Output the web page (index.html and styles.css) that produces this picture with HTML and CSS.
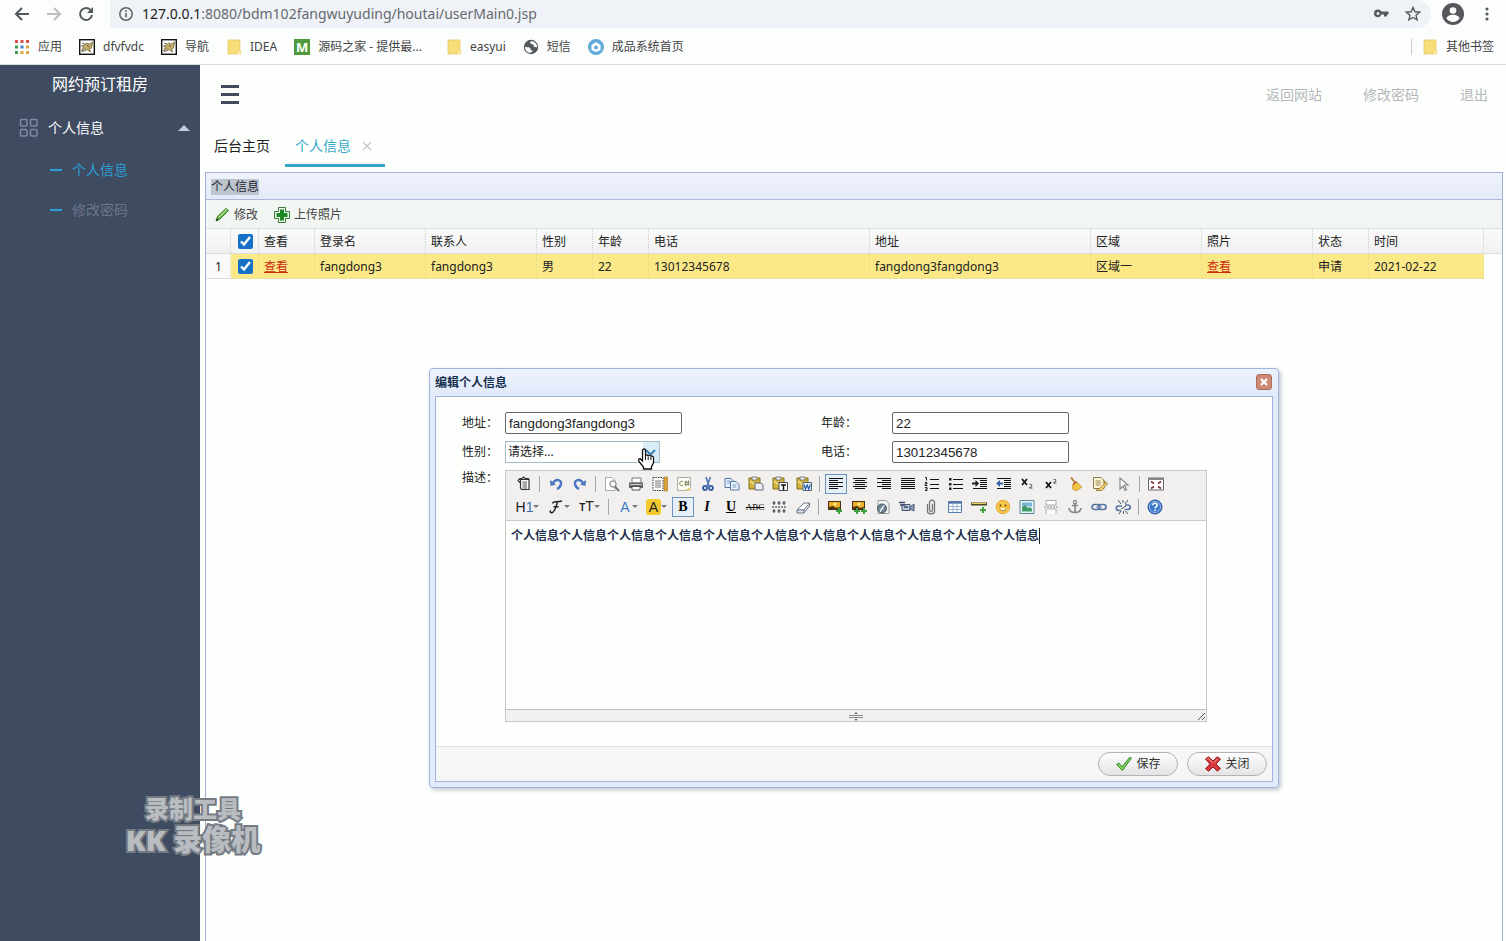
FILE: index.html
```html
<!DOCTYPE html>
<html lang="zh-CN">
<head>
<meta charset="utf-8">
<title>网约预订租房</title>
<link rel="stylesheet" href="styles.css">
</head>
<body>
<svg class="defs" aria-hidden="true">
  <symbol id="goat" viewBox="0 0 16 16"><rect x=".7" y=".7" width="14.600" height="14.600" fill="#fff" stroke="#111" stroke-width="1.400"/><path d="M13.500 3l-3 2-3-1-2 2-3 1 2 1-2 4 3-2 3 1 3 2-1-3 2-1z" fill="#c4ae68" stroke="#5e562f" stroke-width=".7"/><path d="M3 4l3 1M8 6l2 2M3 12.500l4-1" stroke="#444" stroke-width=".8"/></symbol>
  <symbol id="folder" viewBox="0 0 14 16"><path d="M1 1h12v10l1 4H1z" fill="#f9dd7b"/><path d="M1 1h12v10l1 4H1z" fill="none" stroke="#e6c45c" stroke-width=".7"/><path d="M11 15l1-4 2 4z" fill="#fff3c0"/></symbol>
  <symbol id="img" viewBox="0 0 16 16"><rect x="1" y="2" width="13" height="9" fill="#4a3210"/><path d="M2 3h11v5l-4 1-3-2-4 1z" fill="#eeae2a"/><circle cx="8" cy="5" r="1.600" fill="#fff1a0"/></symbol>
  <symbol id="plus" viewBox="0 0 6 6"><path d="M2 0h2v2h2v2H4v2H2V4H0V2h2z" fill="#3fa03f"/></symbol>
  <symbol id="clip" viewBox="0 0 16 16"><path d="M1 2h11v11H1z" fill="#d0b23c" stroke="#84701d"/><path d="M4 1h5v3H4z" fill="#eee" stroke="#666" stroke-width=".8"/><path d="M2 5l9 7" stroke="#e9d980" stroke-width="2"/></symbol>
</svg>

<header class="browser">
  <div class="address-row">
    <button class="plain" aria-label="后退"><svg width="16" height="16" viewBox="0 0 16 16"><path d="M15 8H2M8 2L2 8l6 6" fill="none" stroke="#55585c" stroke-width="2"/></svg></button>
    <button class="plain" aria-label="前进"><svg width="16" height="16" viewBox="0 0 16 16"><path d="M1 8h13M8 2l6 6-6 6" fill="none" stroke="#bcbec0" stroke-width="2"/></svg></button>
    <button class="plain" aria-label="刷新"><svg width="16" height="16" viewBox="0 0 16 16"><path d="M13 4.500A6 6 0 1 0 14 9" fill="none" stroke="#55585c" stroke-width="2"/><path d="M15 1v6H9z" fill="#55585c"/></svg></button>
    <div class="omnibox">
      <svg width="16" height="16" viewBox="0 0 16 16"><circle cx="8" cy="8" r="6.200" fill="none" stroke="#5f6368" stroke-width="1.500"/><path d="M8 7v4.300M8 4.300v1.600" stroke="#5f6368" stroke-width="1.600"/></svg>
      <span class="url"><b>127.0.0.1</b>:8080/bdm102fangwuyuding/houtai/userMain0.jsp</span>
      <svg class="key" width="16" height="16" viewBox="0 0 16 16"><path d="M5 3.500a3.800 3.800 0 1 0 3.400 5H11v2h3v-2h1.500v-3H8.400A3.800 3.800 0 0 0 5 3.500zm0 2.400a1.500 1.500 0 1 1 0 3 1.500 1.500 0 0 1 0-3z" fill="#55585c" fill-rule="evenodd"/></svg>
      <svg width="16" height="16" viewBox="0 0 16 16"><path d="M8 1.500l1.900 4.300 4.700.4-3.600 3.100 1.100 4.600L8 11.500l-4.100 2.400L5 9.300 1.400 6.200l4.700-.4z" fill="none" stroke="#55585c" stroke-width="1.400"/></svg>
    </div>
    <button class="plain" aria-label="用户"><svg width="22" height="22" viewBox="0 0 22 22"><circle cx="11" cy="11" r="11" fill="#55575c"/><circle cx="11" cy="7.500" r="3.300" fill="#fff"/><path d="M4.500 15.500c1-5 12-5 13 0-3 4.500-10 4.500-13 0z" fill="#fff"/></svg></button>
    <button class="plain menu" aria-label="菜单"><svg width="4" height="16" viewBox="0 0 4 16"><g fill="#55585c"><circle cx="2" cy="3" r="1.600"/><circle cx="2" cy="8" r="1.600"/><circle cx="2" cy="13" r="1.600"/></g></svg></button>
  </div>
  <nav class="bookmarks">
    <a href="#"><svg width="16" height="16" viewBox="0 0 16 16"><g fill="#d9534a"><path d="M1 1h3v3H1zM6.500 1h3v3h-3zM12 1h3v3h-3z"/></g><path d="M1 6.500h3v3H1z" fill="#3f9a54"/><path d="M6.500 6.500h3v3h-3z" fill="#3f88c5"/><path d="M12 6.500h3v3h-3z" fill="#dfa53a"/><path d="M1 12h3v3H1z" fill="#3f9a54"/><path d="M6.500 12h3v3h-3zM12 12h3v3h-3z" fill="#dfa53a"/></svg>应用</a>
    <a href="#"><svg width="16" height="16"><use href="#goat"/></svg>dfvfvdc</a>
    <a href="#"><svg width="16" height="16"><use href="#goat"/></svg>导航</a>
    <a href="#"><svg width="16" height="16"><use href="#folder"/></svg>IDEA</a>
    <a href="#"><span class="m-logo">M</span>源码之家 - 提供最...</a>
    <a href="#" class="wide"><svg width="16" height="16"><use href="#folder"/></svg>easyui</a>
    <a href="#"><svg width="16" height="16" viewBox="0 0 16 16"><circle cx="8" cy="8" r="7.200" fill="#54575b"/><path d="M1.800 7.500C3 9 5 7.500 6.500 8.500S7 11 9 11.500 8 13.500 7 14C4 13.500 2 11 1.800 7.500zM8.500 2C6 3.500 7.500 5 9.500 5.200S10 8 12 8s1.500 1 2.200-.5C13.800 5 12 2.500 8.500 2z" fill="#fff"/></svg>短信</a>
    <a href="#"><svg width="16" height="16" viewBox="0 0 16 16"><circle cx="8" cy="8" r="8" fill="#62a9dc"/><path d="M8 3l4.500 3v5L8 13l-4.500-2V6z" fill="#fff"/><circle cx="8" cy="8.500" r="2" fill="#62a9dc"/></svg>成品系统首页</a>
    <a href="#" class="other"><svg width="16" height="16"><use href="#folder"/></svg>其他书签</a>
  </nav>
</header>

<div class="app">
  <aside class="sidebar">
    <h1>网约预订租房</h1>
    <button class="group"><svg width="20" height="20" viewBox="0 0 20 20"><g fill="none" stroke="#7f8aa3" stroke-width="1.500"><rect x="1.500" y="1.500" width="6.500" height="6.500" rx="1"/><rect x="11.500" y="1.500" width="6.500" height="6.500" rx="1"/><rect x="1.500" y="11.500" width="6.500" height="6.500" rx="1"/><rect x="11.500" y="11.500" width="6.500" height="6.500" rx="1"/></g></svg><span>个人信息</span><i class="caret-up"></i></button>
    <a class="sub active" href="#">个人信息</a>
    <a class="sub" href="#">修改密码</a>
  </aside>

  <main class="content">
    <div class="topbar">
      <button class="burger" aria-label="展开菜单"><i></i><i></i><i></i></button>
      <nav><a href="#">返回网站</a><a href="#">修改密码</a><a href="#">退出</a></nav>
    </div>
    <div class="tabs">
      <button class="tab">后台主页</button>
      <button class="tab current">个人信息<svg width="10" height="10" viewBox="0 0 10 10"><path d="M1 1l8 8M9 1L1 9" stroke="#c4c6c8" stroke-width="1.200"/></svg></button>
    </div>
    <section class="panel">
      <h2><span>个人信息</span></h2>
      <div class="tools">
        <button><svg width="16" height="16" viewBox="0 0 16 16"><path d="M2 14l1.500-4.500L12 1.500l2.500 2L6 12z" fill="#6cba48" stroke="#357a26"/><path d="M5 10l8-7.500" stroke="#d3f0c0"/><path d="M2 14l1-2.500L4.500 13z" fill="#222"/></svg>修改</button>
        <button><svg width="16" height="16" viewBox="0 0 16 16"><path d="M4.500.5h7v4h4v7h-4v4h-7v-4h-4v-7h4z" fill="#e9f7e6" stroke="#3a7a3a"/><path d="M6 2.500h4V6h3.500v4H10v3.500H6V10H2.500V6H6z" fill="#1d8a2a"/></svg>上传照片</button>
      </div>
      <table class="grid">
        <colgroup><col class="w-num"><col class="w-chk"><col class="w-s"><col class="w-m"><col class="w-m"><col class="w-s"><col class="w-s"><col class="w-l"><col class="w-l"><col class="w-m"><col class="w-m"><col class="w-s"><col class="w-d"><col></colgroup>
        <thead><tr><th></th><th class="chk"><input type="checkbox" checked aria-label="全选"></th><th>查看</th><th>登录名</th><th>联系人</th><th>性别</th><th>年龄</th><th>电话</th><th>地址</th><th>区域</th><th>照片</th><th>状态</th><th>时间</th><th class="rest"></th></tr></thead>
        <tbody><tr><td class="num">1</td><td class="chk"><input type="checkbox" checked aria-label="选择第1行"></td><td><a href="#">查看</a></td><td>fangdong3</td><td>fangdong3</td><td>男</td><td>22</td><td>13012345678</td><td>fangdong3fangdong3</td><td>区域一</td><td><a href="#">查看</a></td><td>申请</td><td>2021-02-22</td><td class="rest"></td></tr></tbody>
      </table>
    </section>
  </main>
</div>

<section class="dialog" role="dialog" aria-labelledby="dlg-title">
  <div class="dialog-title"><h2 id="dlg-title">编辑个人信息</h2><button aria-label="关闭窗口"><svg width="16" height="16" viewBox="0 0 16 16"><rect x=".5" y=".5" width="15" height="15" rx="2.500" fill="#cf8a74" stroke="#a8705f"/><path d="M5 5l6 6M11 5l-6 6" stroke="#fff" stroke-width="2.200"/></svg></button></div>
  <div class="dialog-body">
    <form class="form">
      <label for="addr">地址：</label>
      <div><input id="addr" type="text" value="fangdong3fangdong3"></div>
      <label for="age">年龄：</label>
      <div><input id="age" type="text" value="22"></div>
      <label for="sex">性别：</label>
      <div class="combo"><select id="sex"><option>请选择...</option></select>
        <svg class="chev" width="16" height="20" viewBox="0 0 16 20"><path d="M3 8l4.500 4.500L12 8" fill="none" stroke="#3d7fb5" stroke-width="2"/></svg>
        <svg class="hand" width="18" height="24" viewBox="0 0 18 24"><path d="M5.500 14V3.500c0-2 3-2 3 0V9c0-1.500 2.700-1.500 2.700.3 0-1.500 2.700-1.300 2.700.5 0-1.300 2.600-1 2.600.8V16l-2 3.500V22H6.500v-2L2 14.500c-1.500-2.200.8-3.500 2-2z" fill="#fff" stroke="#111" stroke-width="1.300"/><path d="M8.500 9v4M11.200 9.500v3.500M13.900 10v3" stroke="#111"/></svg>
      </div>
      <label for="tel">电话：</label>
      <div><input id="tel" type="text" value="13012345678"></div>
      <label class="top" for="desc">描述：</label>
      <div class="editor">
        <div class="ke-toolbar">
          <div class="ke-row">
            <button type="button" aria-label="源代码"><svg viewBox="0 0 16 16"><path d="M4.500 3.500H13v10H5.500l-1-1.500zM4.500 7L2 4.500l2-2h2l1.500-1.500L9 2.500h4" fill="#fff" stroke="#333" stroke-width="1.200"/><path d="M6.500 6H11M6.500 8H11M6.500 10H11M6.500 12H11" stroke="#555"/></svg></button>
            <hr>
            <button type="button" aria-label="后退"><svg viewBox="0 0 16 16"><path d="M5 7c3-5 9-3 8 1-.5 3-2 4-4 5" fill="none" stroke="#4a76c4" stroke-width="2.400"/><path d="M2 4l.5 6L8 8.500z" fill="#4a76c4"/></svg></button>
            <button type="button" aria-label="前进"><svg viewBox="0 0 16 16"><path d="M11 7C8 2 2 4 3 8c.5 3 2 4 4 5" fill="none" stroke="#4a76c4" stroke-width="2.400"/><path d="M14 4l-.5 6L8 8.500z" fill="#4a76c4"/></svg></button>
            <hr>
            <button type="button" aria-label="预览"><svg viewBox="0 0 16 16"><path d="M1.500 1.500H8l3 3v10H1.500z" fill="#fff" stroke="#aaa"/><circle cx="9" cy="8" r="3.200" fill="#eef4f8" stroke="#777"/><path d="M11 10.500l4 4.500" stroke="#777" stroke-width="2"/></svg></button>
            <button type="button" aria-label="打印"><svg viewBox="0 0 16 16"><path d="M4 2h9v5H4z" fill="#fff" stroke="#777"/><path d="M1 6.500h14V12H1z" fill="#666"/><path d="M2 8.500h12" stroke="#ccc"/><path d="M4 10.500h8V14H4z" fill="#fff" stroke="#555"/></svg></button>
            <button type="button" aria-label="模板"><svg viewBox="0 0 16 16"><path d="M1 1.500h10v13H1z" fill="#fff" stroke="#333" stroke-dasharray="1.500 1"/><path d="M3 5h6M3 7h6M3 9h6M3 11h6" stroke="#777"/><path d="M12 1h3.500v14H12z" fill="#dda43c" stroke="#a8741c" stroke-width=".6"/></svg></button>
            <button type="button" aria-label="代码"><svg viewBox="0 0 16 16"><path d="M1.500 1.500h13v10l-3 3h-10z" fill="#fffef4" stroke="#aaa"/><path d="M8 14.500l6.500-3v3z" fill="#d9c76f"/><path d="M7 5.500c-4-1.500-5 5 0 4M10 4.500L9.500 10M12.500 4.500L12 10M8.500 6.200h5M8.300 8.300h5" fill="none" stroke="#6a7a48" stroke-width=".9"/></svg></button>
            <button type="button" aria-label="剪切"><svg viewBox="0 0 16 16"><path d="M6 1l3 9M10.500 1L7 10" stroke="#4c78b6" stroke-width="1.600"/><circle cx="5" cy="12" r="2" fill="none" stroke="#3f63a8" stroke-width="1.900"/><circle cx="11" cy="12" r="2" fill="none" stroke="#3f63a8" stroke-width="1.900"/></svg></button>
            <button type="button" aria-label="复制"><svg viewBox="0 0 16 16"><path d="M1 2.500h6l2 2v7H1z" fill="#e6effa" stroke="#5578aa"/><path d="M6.500 5.500H12l3 3V14H6.500z" fill="#eaf2fc" stroke="#5578aa"/><path d="M3 5h3M3 7h3M8.500 9h4M8.500 11h4" stroke="#7f9cc6"/></svg></button>
            <button type="button" aria-label="粘贴"><svg viewBox="0 0 16 16"><use href="#clip"/><path d="M7 7h6l2 2v5H7z" fill="#e9eef8" stroke="#667"/></svg></button>
            <button type="button" aria-label="粘贴为无格式文本"><svg viewBox="0 0 16 16"><use href="#clip"/><path d="M7 6.500h8.500v8H7z" fill="#fff" stroke="#445"/><path d="M9 9h5M11.500 9v5" stroke="#111" stroke-width="1.500"/></svg></button>
            <button type="button" aria-label="从Word粘贴"><svg viewBox="0 0 16 16"><use href="#clip"/><path d="M7 6.500h8.500v8H7z" fill="#e5effc" stroke="#567"/><path d="M8 8.500l1.500 4.500 1.700-4 1.600 4 1.500-4.500" fill="none" stroke="#245ca8" stroke-width="1.200"/></svg></button>
            <hr>
            <button type="button" class="on" aria-label="左对齐"><svg viewBox="0 0 16 16"><path d="M1 2.500h14M1 4.500h9M1 6.500h14M1 8.500h9M1 10.500h14M1 12.500h9" stroke="#111"/></svg></button>
            <button type="button" aria-label="居中"><svg viewBox="0 0 16 16"><path d="M1 2.500h14M3 4.500h10M1 6.500h14M3 8.500h10M1 10.500h14M3 12.500h10" stroke="#111"/></svg></button>
            <button type="button" aria-label="右对齐"><svg viewBox="0 0 16 16"><path d="M1 2.500h14M6 4.500h9M1 6.500h14M6 8.500h9M1 10.500h14M6 12.500h9" stroke="#111"/></svg></button>
            <button type="button" aria-label="两端对齐"><svg viewBox="0 0 16 16"><path d="M1 2.500h14M1 4.500h14M1 6.500h14M1 8.500h14M1 10.500h14M1 12.500h14" stroke="#111"/></svg></button>
            <button type="button" aria-label="编号"><svg viewBox="0 0 16 16"><path d="M6 3.500h9M6 8.500h9M6 12.500h9" stroke="#111"/><path d="M1 1.500h1.500v3M1 6.500h2v1.300H1.200v1.700H3.500M1 11.500h2v3H1M1.500 13H3" fill="none" stroke="#222" stroke-width="1"/></svg></button>
            <button type="button" aria-label="项目符号"><svg viewBox="0 0 16 16"><path d="M5 3.500h10M5 8.500h10M5 12.500h10" stroke="#111"/><path d="M1 2h2.500v2.500H1zM1 7h2.500v2.500H1zM1 11.500h2.500V14H1z" fill="#222"/></svg></button>
            <button type="button" aria-label="增加缩进"><svg viewBox="0 0 16 16"><path d="M1 2.500h14M8 4.500h7M8 6.500h7M8 8.500h7M8 10.500h7M1 12.500h14" stroke="#111"/><path d="M0 7.500h4" stroke="#222" stroke-width="2"/><path d="M3.500 4v7L7 7.500z" fill="#222"/></svg></button>
            <button type="button" aria-label="减少缩进"><svg viewBox="0 0 16 16"><path d="M1 2.500h14M8 4.500h7M8 6.500h7M8 8.500h7M8 10.500h7M1 12.500h14" stroke="#111"/><path d="M3 7.500h4" stroke="#3d63a8" stroke-width="2"/><path d="M4 4v7L0 7.500z" fill="#3d63a8"/></svg></button>
            <button type="button" aria-label="下标"><svg viewBox="0 0 16 16"><path d="M2 3l5 6M7 3L2 9" stroke="#111" stroke-width="1.700"/><path d="M9.500 9c1-1.500 3-.5 2 1l-2 2h3" fill="none" stroke="#333" stroke-width=".9"/></svg></button>
            <button type="button" aria-label="上标"><svg viewBox="0 0 16 16"><path d="M2 6l5 6M7 6l-5 6" stroke="#111" stroke-width="1.700"/><path d="M9.500 4c1-1.500 3-.5 2 1l-2 2h3" fill="none" stroke="#333" stroke-width=".9"/></svg></button>
            <button type="button" aria-label="清理代码"><svg viewBox="0 0 16 16"><path d="M3 1.500l4 5" stroke="#b3832c" stroke-width="2"/><path d="M4.500 9l4-3 5.500 5-5 3.500-4-1z" fill="#f0c844" stroke="#c08f25" stroke-width=".8"/><path d="M5 8.500l3.500-2.700" stroke="#c23f2c" stroke-width="1.400"/></svg></button>
            <button type="button" aria-label="一键排版"><svg viewBox="0 0 16 16"><path d="M1.500 1.500H9l3 3v8H1.500z" fill="#fff7d8" stroke="#8a7c4a"/><path d="M3.500 5h5M3.500 7h6M3.500 9h5" stroke="#99864a"/><path d="M4 14.500h6l5.500-7-4-3 1.500 3L8 12z" fill="#edd36b" stroke="#8f7228" stroke-width=".8"/></svg></button>
            <button type="button" aria-label="全选"><svg viewBox="0 0 16 16"><path d="M4 2v11l3-3 2 4.500 1.500-.8L8.500 9H12z" fill="#fff" stroke="#888" stroke-width="1.200"/></svg></button>
            <hr>
            <button type="button" aria-label="全屏"><svg viewBox="0 0 16 16"><path d="M.5 2h15v12H.5z" fill="#fff" stroke="#666"/><path d="M.5 3h15" stroke="#888" stroke-width="2"/><path d="M3 5.500L6 7.500M13 5.500l-3 2M3 12.500l3-2M13 12.500l-3-2" stroke="#7a3434" stroke-width="1.600"/></svg></button>
          </div>
          <div class="ke-row">
            <button type="button" class="drop" aria-label="段落"><span class="sans">H<em>1</em></span><i></i></button>
            <button type="button" class="drop" aria-label="字体"><svg viewBox="0 0 16 16"><path d="M4.500 4.500C5 1.500 8 3.500 14 2M9.500 3c-1.500 4-2 9-5 10.500-2 .8-3-1-1.500-2M5.500 7.700h5" fill="none" stroke="#222" stroke-width="1.500"/></svg><i></i></button>
            <button type="button" class="drop" aria-label="文字大小"><span class="sans"><small>T</small>T</span><i></i></button>
            <hr>
            <button type="button" class="drop color" aria-label="文字颜色"><span class="sans blue">A</span><i></i></button>
            <button type="button" class="drop color" aria-label="文字背景"><span class="sans mark">A</span><i></i></button>
            <button type="button" class="on" aria-label="粗体"><b>B</b></button>
            <button type="button" aria-label="斜体"><b class="it">I</b></button>
            <button type="button" aria-label="下划线"><b class="ul">U</b></button>
            <button type="button" aria-label="删除线"><span class="strike">ABC</span></button>
            <button type="button" aria-label="行距"><svg viewBox="0 0 16 16"><path d="M1 8h14" stroke="#222" stroke-dasharray="2 1"/><path d="M3 2v4M8 2v4M13 2v4M3 10v4M8 10v4M13 10v4M1.500 4h3M6.500 4h3M11.500 4h3M1.500 12h3M6.500 12h3M11.500 12h3" stroke="#334"/></svg></button>
            <button type="button" aria-label="删除格式"><svg viewBox="0 0 16 16"><path d="M2 11l7-7h5.500L9 11z" fill="#fff" stroke="#678"/><path d="M2 11h7v3H2zM9 14l5.500-7V4" fill="#dce3ee" stroke="#678"/></svg></button>
            <hr>
            <button type="button" aria-label="图片"><svg viewBox="0 0 16 16"><use href="#img"/><use href="#plus" x="9" y="9" width="6" height="6"/></svg></button>
            <button type="button" aria-label="批量图片"><svg viewBox="0 0 16 16"><use href="#img"/><use href="#plus" x="3" y="9" width="6" height="6"/><use href="#plus" x="10" y="9" width="6" height="6"/></svg></button>
            <button type="button" aria-label="Flash"><svg viewBox="0 0 16 16"><path d="M3 1.500h8l3 3v10H3z" fill="#f2f5f8" stroke="#999"/><circle cx="7" cy="9.500" r="4.500" fill="#71859a" stroke="#455"/><path d="M9.500 6.500c-2 0-2.500 4-4.500 6M6.500 9.500h2" fill="none" stroke="#fff" stroke-width="1.200"/></svg></button>
            <button type="button" aria-label="视音频"><svg viewBox="0 0 16 16"><path d="M3 5.500h8v6H3z" fill="#b8c3d8" stroke="#4a5878"/><path d="M11 8l4-3v7l-4-2z" fill="#8d9cbb" stroke="#4a5878"/><path d="M0 3.500h6M1 6h5M5 8h4" stroke="#3a4868" stroke-width="1.500"/></svg></button>
            <button type="button" aria-label="插入文件"><svg viewBox="0 0 16 16"><path d="M4.500 5v7.500c0 3 7 3 7 0V3.500c0-3.200-5-3.200-5 0V11c0 1.800 3 1.800 3 0V5" fill="none" stroke="#777" stroke-width="1.300"/></svg></button>
            <button type="button" aria-label="表格"><svg viewBox="0 0 16 16"><path d="M1.500 2.500h13v11h-13z" fill="#fff" stroke="#5578ae"/><path d="M1.500 3.500h13" stroke="#5578ae" stroke-width="2.500"/><path d="M6 4v9M10 4v9M2 7.500h12M2 10.500h12" stroke="#9db4d4"/></svg></button>
            <button type="button" aria-label="横线"><svg viewBox="0 0 16 16"><path d="M0 3.500h16v3H0z" fill="#4d4424"/><path d="M1 4.500h14" stroke="#e8cd55"/><use href="#plus" x="9" y="8" width="6" height="6"/></svg></button>
            <button type="button" aria-label="表情"><svg viewBox="0 0 16 16"><circle cx="8" cy="8" r="6.800" fill="#f6c744" stroke="#d99a26" stroke-width=".8"/><path d="M5.500 5.500v2M10.500 5.500v2" stroke="#6b4412" stroke-width="1.500"/><path d="M4.500 9.500c1.500 3 5.500 3 7 0" fill="#fff" stroke="#8b5a16" stroke-width=".8"/></svg></button>
            <button type="button" aria-label="地图"><svg viewBox="0 0 16 16"><path d="M1 1.500h14v13H1z" fill="#eef6f4" stroke="#58839a"/><path d="M3 3.500h10v4H3z" fill="#78b4dc"/><path d="M3 12.500V8l3-2 3 3 2-1 2 2v2.500z" fill="#3f9c6a"/></svg></button>
            <button type="button" aria-label="分页"><svg viewBox="0 0 16 16"><path d="M3 6V1.500h10V6zM3 14.500V10h10v4.500" fill="#fff" stroke="#aaa"/><path d="M1 8h14" stroke="#888" stroke-dasharray="2 1"/></svg></button>
            <button type="button" aria-label="锚点"><svg viewBox="0 0 16 16"><circle cx="8" cy="3" r="1.600" fill="none" stroke="#888" stroke-width="1.200"/><path d="M8 4.500V14M5 6.500h6M2 9c.5 6 11.500 6 12 0" fill="none" stroke="#888" stroke-width="1.700"/></svg></button>
            <button type="button" aria-label="超级链接"><svg viewBox="0 0 16 16"><rect x="1" y="5.500" width="8" height="5" rx="2.500" fill="none" stroke="#5673a4" stroke-width="1.700"/><rect x="7" y="5.500" width="8" height="5" rx="2.500" fill="none" stroke="#5673a4" stroke-width="1.700"/><path d="M5 8h6" stroke="#899ec2"/></svg></button>
            <button type="button" aria-label="取消链接"><svg viewBox="0 0 16 16"><path d="M7 7H3.500c-3 0-3 4.500 0 4.500H6M9.500 10.500H13c3 0 3-4.500 0-4.500h-3" fill="none" stroke="#5673a4" stroke-width="1.600"/><path d="M3 1l3 4M8 1v3M13 1l-3 4M4 15l2-3M8.500 12v3M13 15l-2.500-3M6 10l5-3" stroke="#456"/></svg></button>
            <hr>
            <button type="button" aria-label="关于"><svg viewBox="0 0 16 16"><circle cx="8" cy="8" r="7" fill="#3f79c9" stroke="#2a5596"/><circle cx="8" cy="8" r="5.500" fill="none" stroke="#a9c8f0" stroke-width=".8"/><path d="M5.800 6.300c0-3 4.600-2.500 4.300 0-.2 1.500-2 1.500-2 3M8 10.500v1.600" fill="none" stroke="#fff" stroke-width="1.600"/></svg></button>
          </div>
        </div>
        <div class="ke-edit" id="desc" contenteditable="true" spellcheck="false">个人信息个人信息个人信息个人信息个人信息个人信息个人信息个人信息个人信息个人信息个人信息<span class="ibeam"></span></div>
        <div class="ke-status"><svg width="16" height="10" viewBox="0 0 16 10"><path d="M1 4.500h14M1 6.500h14" stroke="#888"/><path d="M6.500 3L8 1l1.500 2zM6.500 8L8 10l1.500-2z" fill="#555"/></svg><svg class="corner" width="9" height="9" viewBox="0 0 9 9"><path d="M1 8l7-7M5 8l3-3" stroke="#555"/></svg></div>
      </div>
    </form>
    <div class="dialog-foot">
      <button><svg width="18" height="16" viewBox="0 0 18 16"><path d="M1.500 8.500L4 7l3 4L14.500 1.500l2 .5L7.500 14.500z" fill="#83d45c" stroke="#2f8a2a"/></svg>保存</button>
      <button><svg width="18" height="16" viewBox="0 0 18 16"><path d="M1.500 3L4.500.800 9 5l4-4.200L16.500 3 12 8l4.500 4.500-3 2.700L9 11l-4.500 4.200-3-2.400L6 8z" fill="#d9383c" stroke="#96171d"/><path d="M3.500 3l1-.5L8.500 6.500M13.500 3L10 6.500" stroke="#f4a5a5" fill="none"/></svg>关闭</button>
    </div>
  </div>
</section>

<div class="watermark">录制工具<br><strong>KK 录像机</strong></div>
</body>
</html>
```

FILE: styles.css
```css
* { box-sizing: border-box; }
html, body { height: 100%; }
body {
  margin: 0;
  display: flex;
  flex-direction: column;
  overflow: hidden;
  position: relative;
  background: #fdfffd;
  color: #222;
  font: 12px/16px "Noto Sans", "Noto Sans CJK SC", sans-serif;
}
button { font-family: inherit; font-size: inherit; line-height: inherit; color: inherit; padding: 0; border: 0; background: none; }
a { color: inherit; text-decoration: none; }
h1, h2 { margin: 0; font-weight: 400; }
svg { display: block; flex: none; }
.defs { position: absolute; width: 0; height: 0; }

/* browser bar */
.browser { flex: none; border-bottom: 1px solid #dadde0; background: #fcfefd; }
.address-row { display: flex; align-items: center; height: 28px; padding: 0 17px 0 14px; gap: 16px; }
.omnibox { flex: 1; display: flex; align-items: center; gap: 8px; height: 28px; margin-right: -5px; padding: 0 10px 0 8px; background: #eff2f7; border-radius: 0 14px 14px 0; }
.menu { margin-left: 5px; }
.url { flex: 1; font-size: 14px; line-height: 20px; color: #666a70; }
.url b { font-weight: 400; color: #222; }
.key { margin-right: 8px; }
.bookmarks { display: flex; align-items: center; height: 36px; padding: 2px 12px 0 14px; gap: 17px; color: #444; }
.bookmarks a { display: flex; align-items: center; gap: 8px; }
.bookmarks a.wide { margin-left: 7px; }
.bookmarks .other { margin-left: auto; padding-left: 10px; border-left: 1px solid #c6cacd; }
.m-logo { width: 16px; height: 16px; background: #4f9a3c; color: #fff; font-weight: 700; font-size: 13px; text-align: center; }

/* shell */
.app { flex: 1; display: flex; min-height: 0; }
.sidebar { width: 200px; flex: none; background: #3e4b61; color: #fff; }
.sidebar h1 { font-size: 16px; line-height: 38px; text-align: center; }
.group { display: flex; align-items: center; width: 100%; height: 47px; padding: 3px 10px 0 19px; gap: 9px; font-size: 14px; text-align: left; }
.group span { flex: 1; }
.caret-up { border: 6px solid transparent; border-top: 0; border-bottom-color: #c3cad8; }
.sub { display: flex; align-items: center; height: 40px; padding-left: 50px; gap: 10px; font-size: 14px; color: #6c7689; }
.sub::before { content: ""; width: 12px; height: 2px; background: #2a9fd6; }
.sub.active { color: #2a9fd6; }

.content { flex: 1; min-width: 0; display: flex; flex-direction: column; }
.topbar { display: flex; align-items: center; justify-content: space-between; height: 60px; padding: 0 18px 0 21px; flex: none; }
.topbar nav { display: flex; gap: 41px; font-size: 14px; color: #b4b6b8; }
.burger { display: grid; gap: 5px; width: 18px; padding-bottom: 2px; }
.burger i { height: 3px; background: #434a5c; }
.tabs { display: flex; height: 42px; flex: none; }
.tab { display: flex; align-items: center; gap: 11px; padding: 2px 14px 0; font-size: 14px; border-bottom: 3px solid transparent; color: #222; }
.tab.current { margin-left: 1px; padding: 2px 13px 0 10px; color: #36a9c8; border-bottom-color: #36a3c0; }
.panel { flex: 1; margin: 5px 3px 0 5px; border: 1px solid #9fb0d8; border-bottom: 0; }
.panel h2 { height: 27px; padding: 6px 5px 4px; font-size: 12px; line-height: 16px; color: #1c2636; background: linear-gradient(#eff3fc, #e4e9f8); border-bottom: 1px solid #a9b8dc; }
.panel h2 span { display: inline-block; background: #bfc5cd; }
.tools { display: flex; align-items: center; gap: 16px; height: 29px; padding: 1px 8px 0; background: #f1f6f2; border-bottom: 1px solid #dcdfe0; color: #444; }
.tools button { display: flex; align-items: center; gap: 4px; }

.grid { width: 100%; table-layout: fixed; border-collapse: separate; border-spacing: 0; }
.w-num { width: 25px; } .w-chk { width: 28px; } .w-s { width: 56px; } .w-m { width: 111px; } .w-l { width: 221px; } .w-d { width: 115px; }
.grid th, .grid td { height: 25px; padding: 2px 4px 0 5px; text-align: left; font-weight: 400; white-space: nowrap; border-right: 1px dotted #ccc; border-bottom: 1px solid #ddd; }
.grid th { background: linear-gradient(#fafafa, #f1f1f2); }
.grid td { background: #fbe988; border-right-color: #eadb8c; border-bottom-color: #ece0a0; }
.grid .num { text-align: center; background: #f8f9f8; border-color: #ddd; }
.grid .chk { padding: 0; }
.grid .chk input { display: block; width: 15px; height: 15px; margin: 0 0 0 7px; accent-color: #1670c8; }
.grid th.rest { border-right: 0; }
.grid td.rest { background: none; border: 0; }
.grid td a { color: #cc2b12; text-decoration: underline; }

/* edit window */
.dialog { position: absolute; left: 429px; top: 368px; width: 850px; padding: 0 5px 5px; border: 1px solid #9db3dc; border-radius: 4px; background: linear-gradient(#edf3fc, #e2eafb 26px); box-shadow: 2px 2px 4px #c4c8d0; }
.dialog-title { display: flex; align-items: center; justify-content: space-between; height: 27px; }
.dialog-title h2 { font-size: 12px; line-height: 16px; font-weight: 700; color: #16304f; }
.dialog-title button { padding: 0 1px 1px 0; }
.dialog-body { border: 1px solid #9db3dc; background: #fdfffd; }
.form { display: grid; grid-template-columns: 43px 316px 71px 1fr; grid-template-rows: 22px 22px auto; gap: 7px 0; align-items: center; padding: 15px 65px 24px 26px; }
.form input { display: block; width: 177px; height: 22px; padding: 0 3px; border: 1px solid #666; border-radius: 2px; background: #fff; font-family: "Liberation Sans", sans-serif; color: #222; }
.form .top { align-self: start; }
.combo { position: relative; width: 155px; }
.combo select { display: block; width: 155px; height: 22px; padding: 0 2px 2px; appearance: none; border: 1px solid #a9b9c8; border-radius: 0; background: #fff; font-family: inherit; font-size: 12px; color: #222; }
.chev { position: absolute; right: 1px; top: 1px; background: #d9edf8; }
.hand { position: absolute; left: 132px; top: 6px; }

.editor { grid-column: 2 / 5; border: 1px solid #c8c8c4; }
.ke-toolbar { padding: 1px 6px 2px; background: #f2f0ee; border-bottom: 1px solid #ccc; }
.ke-row { display: flex; height: 23px; align-items: center; }
.ke-row button { display: flex; align-items: center; justify-content: center; width: 22px; height: 20px; margin: 0 1px; flex: none; border: 1px solid transparent; color: #222; }
.ke-row button.on { border-color: #6d94c0; background: #e6eff8; }
.ke-row button.drop { width: 31px; margin: 0; }
.ke-row button.color { width: 29px; }
.ke-row svg { width: 16px; height: 16px; }
.ke-row hr { width: 1px; height: 16px; margin: 0 4px 0 3px; border: 0; background: #a8a8a8; flex: none; }
.drop i { border: 3px solid transparent; border-top-color: #777; border-bottom: 0; }
.sans { font: 14px/16px "Liberation Sans", sans-serif; }
.sans em { font-style: normal; color: #3c6fb0; }
.sans small { font-size: 10px; font-weight: 700; }
.sans.blue { color: #3c7cc0; padding: 0 2px 0 3px; }
.sans.mark { background: #f3c92f; border-radius: 3px; padding: 0 3px; }
.ke-row b { font: 700 14px/16px "Liberation Serif", serif; color: #000; }
.ke-row b.it { font-style: italic; }
.ke-row b.ul { text-decoration: underline; }
.strike { font: 9px/12px "Liberation Serif", serif; color: #000; text-decoration: line-through; }
.ke-edit { height: 188px; padding: 7px 5px; font-weight: 700; color: #1c2f4c; outline: 0; }
.ibeam { display: inline-block; width: 1px; height: 16px; background: #222; vertical-align: top; }
.ke-status { display: flex; justify-content: center; align-items: center; height: 12px; position: relative; background: #f0f2f0; border-top: 1px solid #bfbfbf; }
.corner { position: absolute; right: 0; bottom: 0; }
.dialog-foot { display: flex; justify-content: flex-end; gap: 9px; padding: 5px; border-top: 1px solid #dedfe2; background: #f6f6f7; }
.dialog-foot button { display: flex; align-items: center; justify-content: center; gap: 3px; width: 80px; height: 24px; border: 1px solid #b2b2b4; border-radius: 12px; background: linear-gradient(#fdfdfd, #e4e4e6); color: #333; }

/* recorder badge */
.watermark { position: absolute; left: 124px; top: 793px; width: 138px; text-align: center; white-space: nowrap; font-size: 24px; line-height: 31px; font-weight: 900; color: #b9bdc2; -webkit-text-stroke: 4px #757b83; paint-order: stroke fill; }
.watermark strong { font-size: 29px; font-weight: 900; }
```
